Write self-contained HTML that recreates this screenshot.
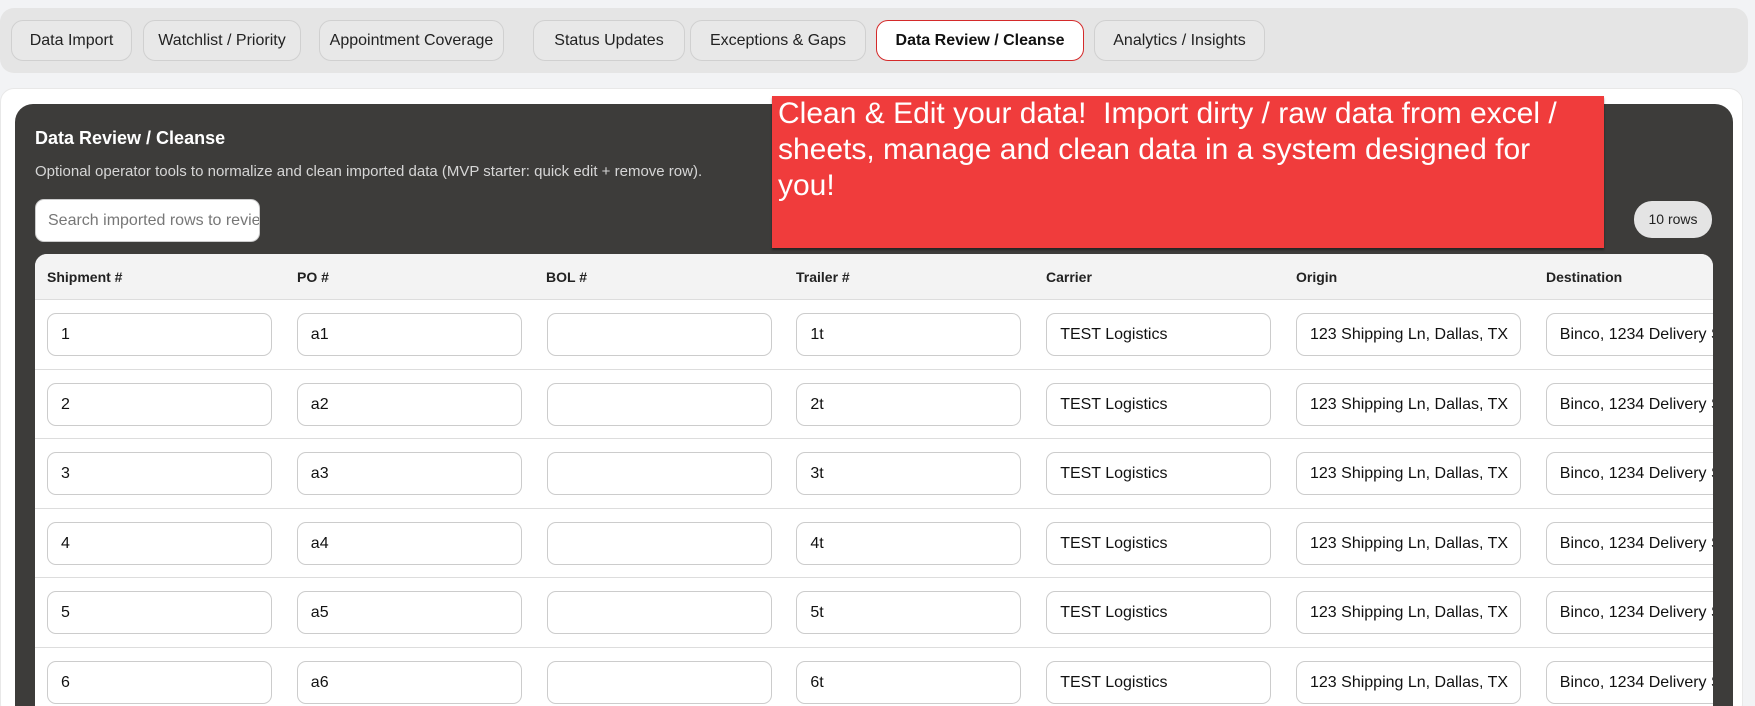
<!DOCTYPE html>
<html><head><style>
*{box-sizing:border-box;margin:0;padding:0}
html,body{width:1755px;height:706px;overflow:hidden}
body{background:#f2f3f5;font-family:"Liberation Sans",sans-serif;position:relative}
.tabbar{position:absolute;left:0;top:8px;width:1748px;height:65px;background:#e5e5e5;border-radius:14px}
.tab{position:absolute;top:12px;height:41px;border:1px solid #d0d0d0;border-radius:12px;background:#e8e8e8;font-size:16px;color:#222;line-height:39px;text-align:center}
.tab.act{background:#fff;border:1.5px solid #d42a2a;font-weight:bold;color:#111}
.card{position:absolute;left:0;top:88px;width:1743px;height:630px;background:#fff;border-radius:14px;border:1px solid #e8e8e8}
.panel{position:absolute;left:15px;top:104px;width:1718px;height:620px;background:#3d3c3a;border-radius:18px}
h1{position:absolute;left:35px;top:128px;font-size:18px;color:#fff;font-weight:bold}
.sub{position:absolute;left:35px;top:163px;font-size:15px;color:#d6d6d6}
.search{position:absolute;left:35px;top:199px;width:225px;height:43px;background:#fff;border-radius:9px;border:1px solid #ccc;font-size:16px;color:#777;padding:12px 0 0 12px;overflow:hidden;white-space:nowrap}
.pill{position:absolute;left:1634px;top:201px;width:78px;height:37px;background:#e4e4e4;border-radius:18px;font-size:14px;color:#222;text-align:center;line-height:37px}
.red{position:absolute;left:772px;top:96px;width:832px;height:152px;background:#f03c3c;color:#fff;font-size:30px;line-height:36px;padding:0 0 0 6px;white-space:nowrap;box-shadow:0 2px 2px rgba(0,0,0,.4)}
.table{position:absolute;left:35px;top:254px;width:1678px;height:460px;background:#fff;border-radius:12px 12px 0 0;overflow:hidden}
.thead{height:46px;background:#f3f3f3;border-bottom:1px solid #ddd;position:relative}
.th{position:absolute;top:15px;font-size:14px;font-weight:bold;color:#222}
.row{height:69.6px;border-bottom:1px solid #ddd;position:relative}
.in{position:absolute;top:13px;width:225px;height:43px;border:1px solid #ccc;border-radius:9px;font-size:16px;color:#111;padding:12px 0 0 13px;white-space:nowrap;overflow:hidden}
</style></head><body>
<div class="tabbar">
<div class="tab" style="left:11px;width:121px">Data Import</div>
<div class="tab" style="left:143px;width:158px">Watchlist / Priority</div>
<div class="tab" style="left:319px;width:185px">Appointment Coverage</div>
<div class="tab" style="left:533px;width:152px">Status Updates</div>
<div class="tab" style="left:690px;width:176px">Exceptions &amp; Gaps</div>
<div class="tab act" style="left:876px;width:208px">Data Review / Cleanse</div>
<div class="tab" style="left:1094px;width:171px">Analytics / Insights</div>
</div>
<div class="card"></div>
<div class="panel"></div>
<h1>Data Review / Cleanse</h1>
<div class="sub">Optional operator tools to normalize and clean imported data (MVP starter: quick edit + remove row).</div>
<div class="search">Search imported rows to review</div>
<div class="pill">10 rows</div>
<div class="table">
<div class="thead">
<div class="th" style="left:12px">Shipment #</div><div class="th" style="left:262px">PO #</div><div class="th" style="left:511px">BOL #</div><div class="th" style="left:761px">Trailer #</div><div class="th" style="left:1011px">Carrier</div><div class="th" style="left:1261px">Origin</div><div class="th" style="left:1511px">Destination</div>
</div>
<div id="rows"></div>
</div>
<div class="red">Clean &amp; Edit your data!&nbsp; Import dirty / raw data from excel /<br>sheets, manage and clean data in a system designed for<br>you!</div>
<script>
var h='';for(var i=1;i<=6;i++){var v=[i,'a'+i,'',i+'t','TEST Logistics','123 Shipping Ln, Dallas, TX','Binco, 1234 Delivery St'];h+='<div class="row">';for(var c=0;c<7;c++){h+='<div class="in" style="left:'+(12+c*249.8)+'px">'+v[c]+'</div>';}h+='</div>';}
document.getElementById('rows').innerHTML=h;
</script>
</body></html>
